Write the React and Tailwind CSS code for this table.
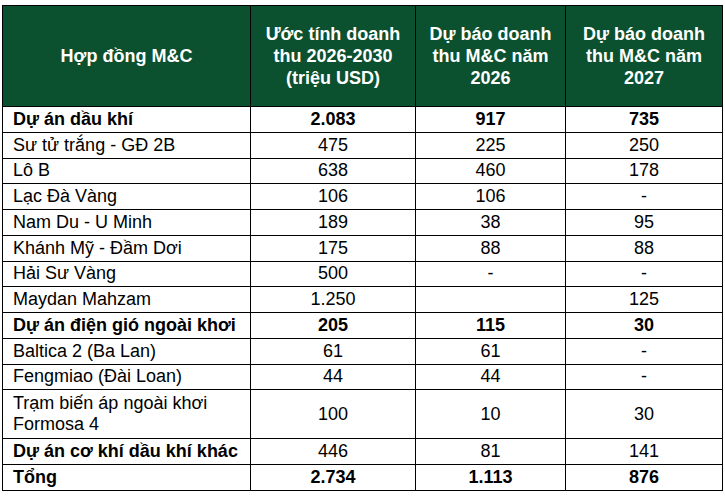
const HEAD = [
  'Hợp đồng M&C',
  'Ước tính doanh thu 2026-2030 (triệu USD)',
  'Dự báo doanh thu M&C năm 2026',
  'Dự báo doanh thu M&C năm 2027',
]

const ROWS = [
  { ten: 'Dự án dầu khí', v: ['2.083', '917', '735'], bold: true },
  { ten: 'Sư tử trắng - GĐ 2B', v: ['475', '225', '250'] },
  { ten: 'Lô B', v: ['638', '460', '178'] },
  { ten: 'Lạc Đà Vàng', v: ['106', '106', '-'] },
  { ten: 'Nam Du - U Minh', v: ['189', '38', '95'] },
  { ten: 'Khánh Mỹ - Đầm Dơi', v: ['175', '88', '88'] },
  { ten: 'Hải Sư Vàng', v: ['500', '-', '-'] },
  { ten: 'Maydan Mahzam', v: ['1.250', '', '125'] },
  { ten: 'Dự án điện gió ngoài khơi', v: ['205', '115', '30'], bold: true },
  { ten: 'Baltica 2 (Ba Lan)', v: ['61', '61', '-'] },
  { ten: 'Fengmiao (Đài Loan)', v: ['44', '44', '-'] },
  { ten: 'Trạm biến áp ngoài khơi Formosa 4', v: ['100', '10', '30'], tall: true },
  { ten: 'Dự án cơ khí dầu khí khác', v: ['446', '81', '141'], bold: true, onlyName: true },
  { ten: 'Tổng', v: ['2.734', '1.113', '876'], bold: true },
]

export default function App() {
  return (
    <div className="w-[725px] h-[497px] bg-white pt-[5px] pl-[2px] font-['Liberation_Sans',Arial,sans-serif] text-black">
      <table className="border-collapse table-fixed w-[720px]">
        <colgroup>
          <col className="w-[248px]" />
          <col className="w-[165px]" />
          <col className="w-[150px]" />
          <col className="w-[157px]" />
        </colgroup>
        <thead>
          <tr className="h-[101px] bg-[#0b5130]">
            {HEAD.map((h, i) => (
              <th
                key={i}
                className={`border border-black text-white font-bold text-[18px] leading-[22px] text-center align-middle ${
                  i === 0 ? 'px-2' : 'px-2'
                }`}
              >
                {h}
              </th>
            ))}
          </tr>
        </thead>
        <tbody>
          {ROWS.map(r => (
            <tr key={r.ten} className={r.tall ? 'h-[49px]' : 'h-[25.75px]'}>
              <td
                className={`border border-black pl-[10px] pr-1 text-[18px] leading-[21px] ${
                  r.bold ? 'font-bold' : ''
                }`}
              >
                {r.ten}
              </td>
              {r.v.map((x, i) => (
                <td
                  key={i}
                  className={`border border-black text-center text-[18px] leading-[21px] ${
                    r.bold && !r.onlyName ? 'font-bold' : ''
                  }`}
                >
                  {x}
                </td>
              ))}
            </tr>
          ))}
        </tbody>
      </table>
    </div>
  )
}
